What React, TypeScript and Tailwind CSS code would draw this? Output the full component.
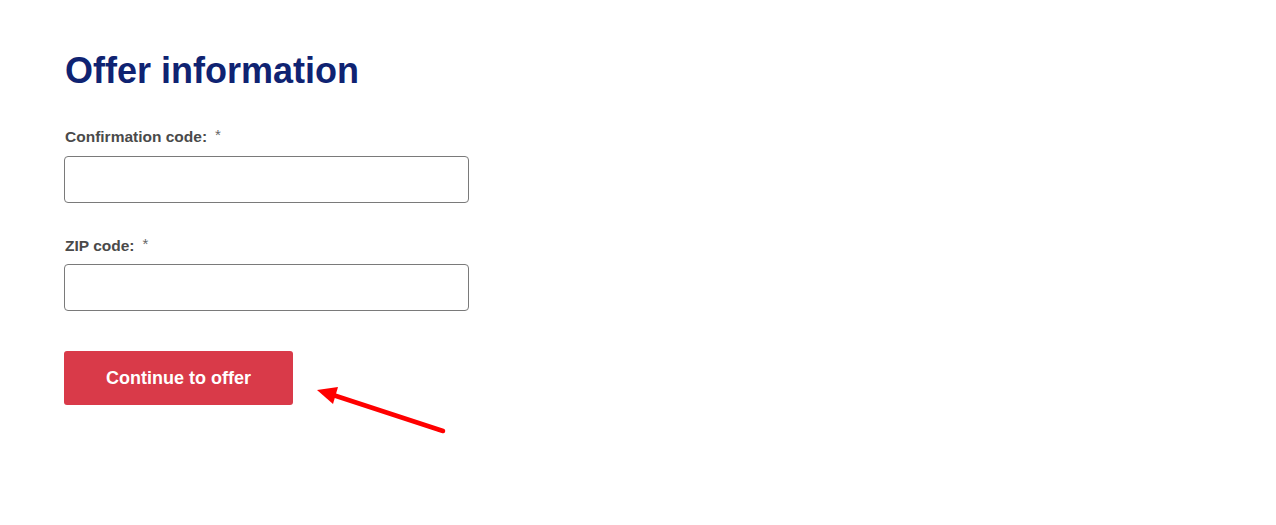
import React from "react";

export default function App() {
  return (
    <div className="relative min-h-[525px] w-full bg-white" style={{ fontFamily: '"Liberation Sans", Arial, sans-serif' }}>
      <div className="pl-[64px] pt-[49px]">
        <h1 className="ml-[1px] text-[36px] leading-[43px] font-bold text-[#0f2372]">Offer information</h1>
        <div className="mt-[35px] flex flex-col">
          <label className="ml-[1px] flex items-start text-[15.5px] leading-[20px] font-bold text-[#4a4a4a]">
            <span>Confirmation code:</span>
            <span className="ml-[8px] mt-[0px] text-[15px] leading-[15px] font-normal text-[#666]">*</span>
          </label>
          <input className="mt-[9px] h-[47px] w-[405px] rounded-[4px] border border-[#7a7a7a] bg-white outline-none" />
        </div>
        <div className="mt-[33px] flex flex-col">
          <label className="ml-[1px] flex items-start text-[15.5px] leading-[20px] font-bold text-[#4a4a4a]">
            <span>ZIP code:</span>
            <span className="ml-[8px] mt-[0px] text-[15px] leading-[15px] font-normal text-[#666]">*</span>
          </label>
          <input className="mt-[8px] h-[47px] w-[405px] rounded-[4px] border border-[#7a7a7a] bg-white outline-none" />
        </div>
        <button className="mt-[40px] h-[54px] w-[229px] rounded-[3px] bg-[#d93a49] text-[18px] font-bold text-white">
          Continue to offer
        </button>
      </div>
      <svg className="absolute left-0 top-0" width="1276" height="525" viewBox="0 0 1276 525">
        <line x1="443" y1="431" x2="330" y2="394" stroke="#ff0000" strokeWidth="4.5" strokeLinecap="round" />
        <polygon points="317,390 338,387 333,404" fill="#ff0000" />
      </svg>
    </div>
  );
}
